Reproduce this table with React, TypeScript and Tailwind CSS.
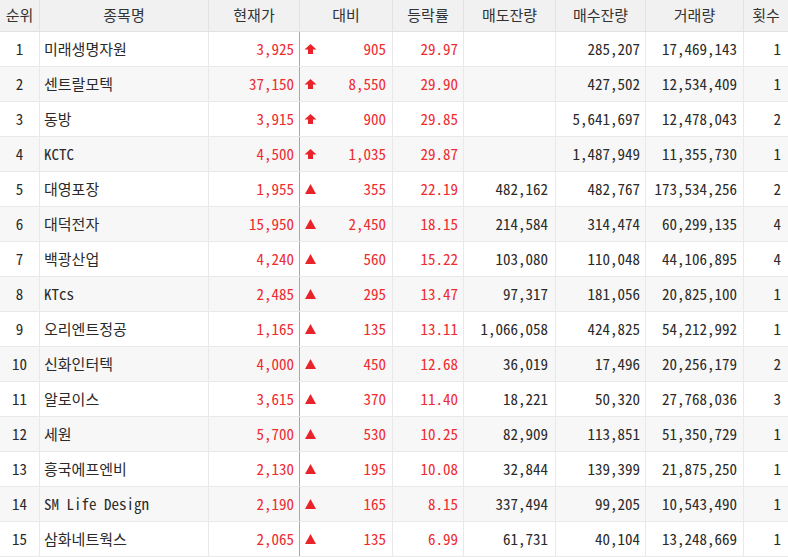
type Row = {
  rank: number;
  name: string;
  price: string;
  limit: boolean;
  diff: string;
  rate: string;
  sell: string;
  buy: string;
  volume: string;
  count: number;
};

const rows: Row[] = [
  {rank: 1, name: '미래생명자원', price: '3,925', limit: true, diff: '905', rate: '29.97', sell: '', buy: '285,207', volume: '17,469,143', count: 1},
  {rank: 2, name: '센트랄모텍', price: '37,150', limit: true, diff: '8,550', rate: '29.90', sell: '', buy: '427,502', volume: '12,534,409', count: 1},
  {rank: 3, name: '동방', price: '3,915', limit: true, diff: '900', rate: '29.85', sell: '', buy: '5,641,697', volume: '12,478,043', count: 2},
  {rank: 4, name: 'KCTC', price: '4,500', limit: true, diff: '1,035', rate: '29.87', sell: '', buy: '1,487,949', volume: '11,355,730', count: 1},
  {rank: 5, name: '대영포장', price: '1,955', limit: false, diff: '355', rate: '22.19', sell: '482,162', buy: '482,767', volume: '173,534,256', count: 2},
  {rank: 6, name: '대덕전자', price: '15,950', limit: false, diff: '2,450', rate: '18.15', sell: '214,584', buy: '314,474', volume: '60,299,135', count: 4},
  {rank: 7, name: '백광산업', price: '4,240', limit: false, diff: '560', rate: '15.22', sell: '103,080', buy: '110,048', volume: '44,106,895', count: 4},
  {rank: 8, name: 'KTcs', price: '2,485', limit: false, diff: '295', rate: '13.47', sell: '97,317', buy: '181,056', volume: '20,825,100', count: 1},
  {rank: 9, name: '오리엔트정공', price: '1,165', limit: false, diff: '135', rate: '13.11', sell: '1,066,058', buy: '424,825', volume: '54,212,992', count: 1},
  {rank: 10, name: '신화인터텍', price: '4,000', limit: false, diff: '450', rate: '12.68', sell: '36,019', buy: '17,496', volume: '20,256,179', count: 2},
  {rank: 11, name: '알로이스', price: '3,615', limit: false, diff: '370', rate: '11.40', sell: '18,221', buy: '50,320', volume: '27,768,036', count: 3},
  {rank: 12, name: '세원', price: '5,700', limit: false, diff: '530', rate: '10.25', sell: '82,909', buy: '113,851', volume: '51,350,729', count: 1},
  {rank: 13, name: '흥국에프엔비', price: '2,130', limit: false, diff: '195', rate: '10.08', sell: '32,844', buy: '139,399', volume: '21,875,250', count: 1},
  {rank: 14, name: 'SM Life Design', price: '2,190', limit: false, diff: '165', rate: '8.15', sell: '337,494', buy: '99,205', volume: '10,543,490', count: 1},
  {rank: 15, name: '삼화네트웍스', price: '2,065', limit: false, diff: '135', rate: '6.99', sell: '61,731', buy: '40,104', volume: '13,248,669', count: 1},
];

const headers = ['순위', '종목명', '현재가', '대비', '등락률', '매도잔량', '매수잔량', '거래량', '횟수'];

const cols = 'grid grid-cols-[40px_169px_91px_93px_71px_92px_90px_98px_44px]';

// 상한가는 굵은 화살표, 그 외 상승은 삼각형
const UpIcon = ({limit}: {limit: boolean}) => (
  <svg width="13" height="12" viewBox="0 0 13 12" className="shrink-0">
    {limit ? (
      <path d="M6.5 1 L12.5 6.5 H9 V11 H4 V6.5 H0.5 Z" fill="#e8232a" />
    ) : (
      <path d="M6.5 1 L12 11 H1 Z" fill="#e8232a" />
    )}
  </svg>
);

const cell = 'flex items-center border-r border-[#e9e9e9] h-full';

export default function App() {
  return (
    <div
      className="w-[788px] h-[557px] overflow-hidden bg-white text-[15px] text-[#2a2a2a]"
      style={{fontFamily: '"Noto Sans Mono CJK KR", "Noto Sans CJK KR", sans-serif'}}
    >
      {/* HEADER */}
      <div className={`${cols} h-[32px] bg-[#f1f1f1] border-b border-[#e2e2e2] text-[#333]`}>
        {headers.map((h, i) => (
          <div
            key={h}
            className={`flex items-center justify-center h-full ${
              i < headers.length - 1 ? 'border-r border-[#e2e2e2]' : ''
            }`}
          >
            {h}
          </div>
        ))}
      </div>

      {/* BODY */}
      {rows.map((r) => (
        <div
          key={r.rank}
          className={`${cols} h-[35px] border-b border-[#e9e9e9] ${
            r.rank % 2 === 0 ? 'bg-[#f7f7f7]' : 'bg-white'
          }`}
        >
          <div className={`${cell} justify-center`}>{r.rank}</div>
          <div className={`${cell} pl-[4px] whitespace-nowrap`}>{r.name}</div>
          <div className="flex items-center h-full justify-end pr-[5px] text-[#ee2b2f] border-r border-[#a8a8a8]">
            {r.price}
          </div>
          <div className={`${cell} justify-between pl-[4px] pr-[6px] text-[#ee2b2f]`}>
            <UpIcon limit={r.limit} />
            <span>{r.diff}</span>
          </div>
          <div className={`${cell} justify-end pr-[5px] text-[#ee2b2f]`}>{r.rate}</div>
          <div className={`${cell} justify-end pr-[7px]`}>{r.sell}</div>
          <div className={`${cell} justify-end pr-[5px]`}>{r.buy}</div>
          <div className={`${cell} justify-end pr-[6px]`}>{r.volume}</div>
          <div className="flex items-center h-full justify-end pr-[7px]">{r.count}</div>
        </div>
      ))}
    </div>
  );
}
